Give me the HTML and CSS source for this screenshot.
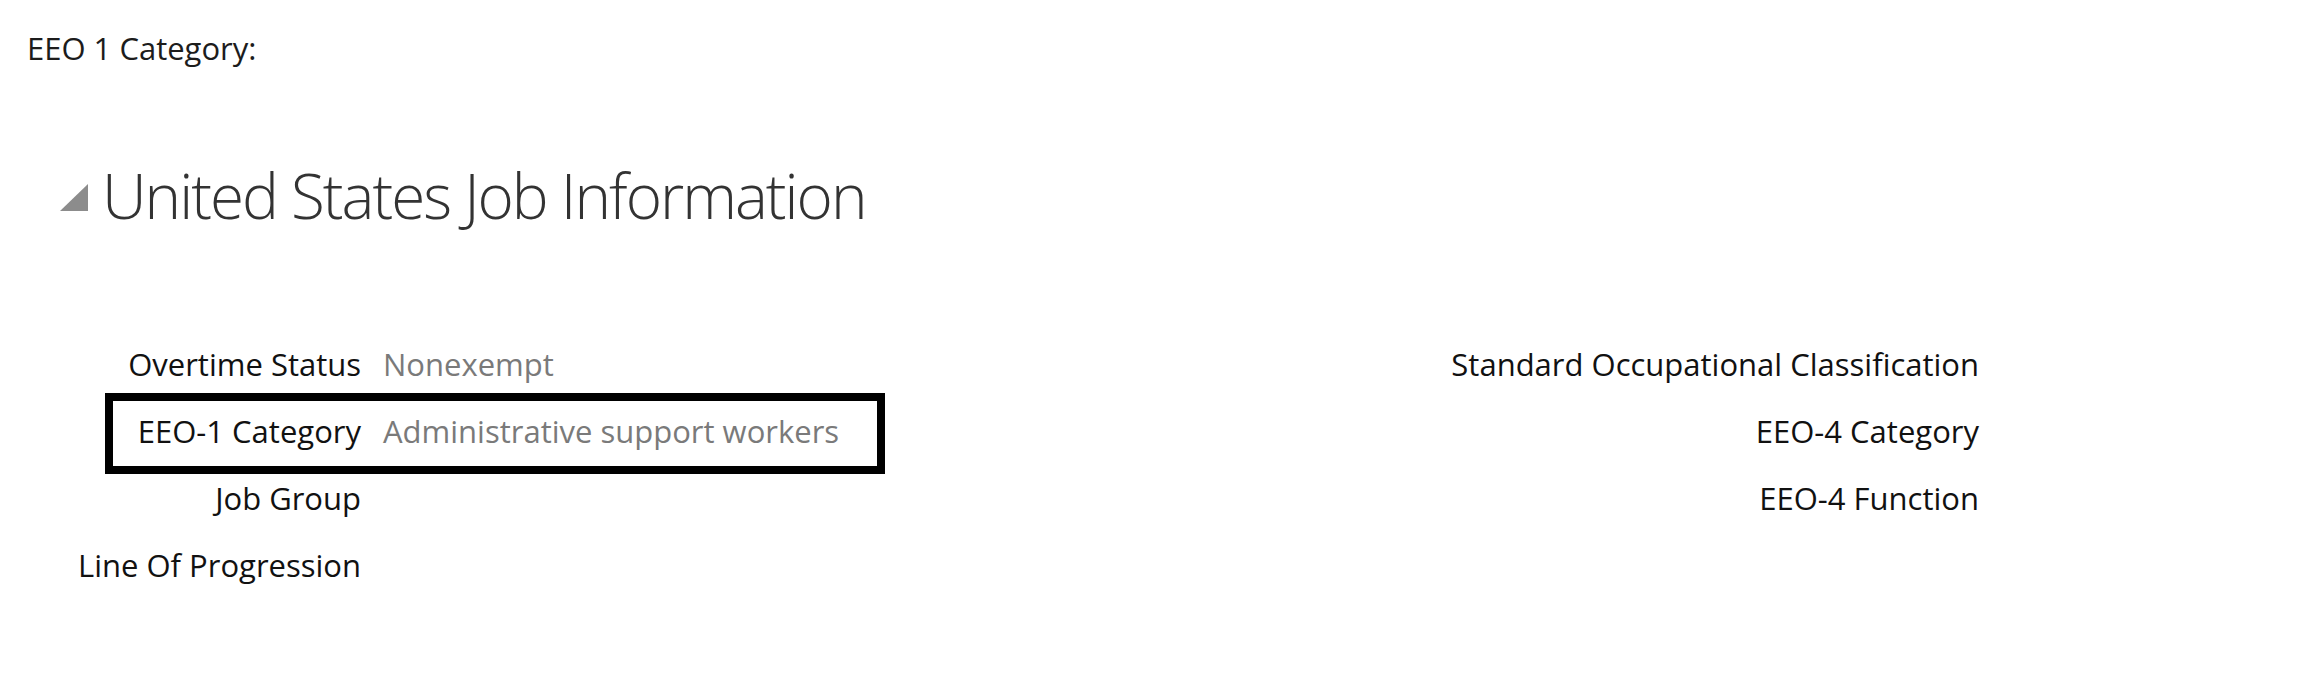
FILE: index.html
```html
<!DOCTYPE html>
<html lang="en">
<head>
<meta charset="utf-8">
<title>United States Job Information</title>
<link rel="stylesheet" href="styles.css">
</head>
<body>
  <p class="note">EEO 1 Category:</p>
  <div class="section-header">
    <svg class="disclosure" width="28" height="27" viewBox="0 0 28 27" aria-hidden="true">
      <polygon points="0,27 28,27 28,0" fill="#8c8c8c"/>
    </svg>
    <h1 class="section-title">United States Job Information</h1>
  </div>
  <div class="form">
    <div class="col col-left">
      <div class="row">
        <span class="label">Overtime Status</span>
        <span class="value">Nonexempt</span>
      </div>
      <div class="row highlight">
        <span class="label">EEO-1 Category</span>
        <span class="value">Administrative support workers</span>
      </div>
      <div class="row">
        <span class="label">Job Group</span>
        <span class="value"></span>
      </div>
      <div class="row">
        <span class="label">Line Of Progression</span>
        <span class="value"></span>
      </div>
    </div>
    <div class="col col-right">
      <div class="row">
        <span class="label">Standard Occupational Classification</span>
      </div>
      <div class="row">
        <span class="label">EEO-4 Category</span>
      </div>
      <div class="row">
        <span class="label">EEO-4 Function</span>
      </div>
    </div>
  </div>
</body>
</html>
```

FILE: styles.css
```css
html, body {
  margin: 0;
  padding: 0;
  background: #ffffff;
}

body {
  font-family: "Open Sans", "Noto Sans", sans-serif;
  color: #111111;
  width: 2324px;
  height: 692px;
  overflow: hidden;
}

.note {
  margin: 27px 0 0 27px;
  font-size: 31px;
  line-height: 42px;
  color: #1c1c1c;
}

.section-header {
  display: flex;
  align-items: center;
  gap: 14px;
  margin: 94px 0 0 60px;
  height: 64px;
}

.disclosure {
  flex: none;
  margin-top: 4px;
}

.section-title {
  margin: 0;
  font-size: 62px;
  font-weight: 300;
  letter-spacing: -2px;
  line-height: 64px;
  color: #333333;
}

.form {
  display: grid;
  grid-template-columns: 900px 1021px;
  margin-top: 103px;
  padding-left: 58px;
}

.row {
  display: flex;
  align-items: center;
  height: 67px;
  font-size: 31px;
  line-height: 42px;
  position: relative;
}

.col-left .label {
  width: 303px;
  text-align: right;
  flex: none;
}

.col-right .label {
  width: 100%;
  text-align: right;
}

.label {
  color: #111111;
}

.value {
  margin-left: 22px;
  color: #7a7a7a;
}

.highlight::after {
  content: "";
  position: absolute;
  left: 47px;
  top: -4px;
  width: 764px;
  height: 65px;
  border: 8px solid #000000;
}
```
